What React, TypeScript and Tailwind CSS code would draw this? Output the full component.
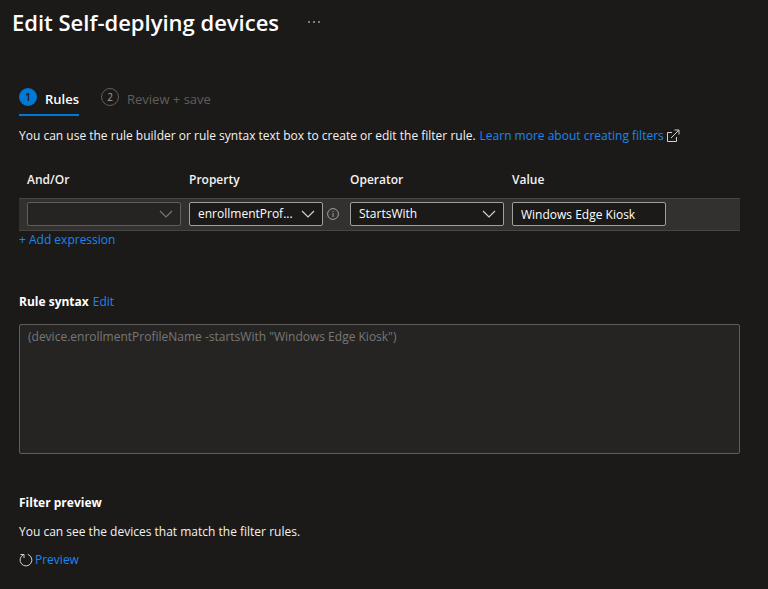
import type { ReactNode, SelectHTMLAttributes } from "react";

const ChevronDown = ({ className }: { className: string }) => (
  <svg viewBox="0 0 14 8" className={className} fill="none" stroke="currentColor" aria-hidden="true">
    <path d="M1 1l6 6 6-6" strokeWidth="1.2" />
  </svg>
);

const InfoIcon = () => (
  <svg viewBox="0 0 12 12" className="h-3 w-3" fill="none" stroke="currentColor" aria-hidden="true">
    <circle cx="6" cy="6" r="5.4" />
    <path d="M6 5v4M6 3v1" />
  </svg>
);

const ExternalIcon = () => (
  <svg viewBox="0 0 14 14" className="h-3.5 w-3.5" fill="none" stroke="currentColor" aria-hidden="true">
    <path d="M6 3.5H1.5v9h9V8" />
    <path d="M5 9l7.5-7.5M8.5 1h4.5v4.5" />
  </svg>
);

const RefreshIcon = () => (
  <svg viewBox="0 0 14 14" className="h-3.5 w-3.5" fill="none" stroke="currentColor" aria-hidden="true">
    <path d="M8.8 1.4A5.9 5.9 0 1 1 4.4 1.7" />
    <path d="M1.5 1.5h3.5V5" />
  </svg>
);

type DropdownProps = SelectHTMLAttributes<HTMLSelectElement> & { children: ReactNode };

const Dropdown = ({ children, ...props }: DropdownProps) => (
  <div className="relative min-w-0 flex-1">
    <select
      {...props}
      className="block h-6 w-full appearance-none rounded-xs border border-[#a19f9d] bg-[#1b1a19] pr-6 pl-2 text-white disabled:border-[#605e5c] disabled:bg-[#252423] disabled:opacity-100"
    >
      {children}
    </select>
    <ChevronDown
      className={
        props.disabled
          ? "pointer-events-none absolute top-2 right-2 h-2 w-3.5 text-[#797775]"
          : "pointer-events-none absolute top-2 right-2 h-2 w-3.5 text-[#d2d0ce]"
      }
    />
  </div>
);

export default function App() {
  return (
    <div className="min-h-screen bg-[#1b1a19] font-['Open_Sans','Noto_Sans',sans-serif] text-[12px] leading-4 text-[#f3f2f1]">
      {/* Title */}
      <header className="flex items-center gap-7 px-3 pt-1.5">
        <h1 className="text-[22px] leading-8 font-semibold text-white">Edit Self-deplying devices</h1>
        <button type="button" aria-label="More actions" className="text-[#a19f9d]">
          <svg viewBox="0 0 14 4" className="h-1 w-3.5" fill="currentColor" aria-hidden="true">
            <circle cx="2" cy="2" r="1" />
            <circle cx="7" cy="2" r="1" />
            <circle cx="12" cy="2" r="1" />
          </svg>
        </button>
      </header>

      <main className="pt-[50px] pr-7 pb-4 pl-[19px]">
        {/* Steps */}
        <nav className="flex gap-[22px]">
          <button type="button" className="flex h-7 items-start gap-2 border-b-2 border-[#0078d4] font-semibold text-white">
            <span className="flex h-[18px] w-[18px] items-center justify-center rounded-full bg-[#0078d4] text-[10px] text-[#1b1a19]">
              1
            </span>
            <span className="text-[13px] leading-[22px]">Rules</span>
          </button>
          <button type="button" className="flex h-7 items-start gap-2 text-[#605e5c]">
            <span className="flex h-[18px] w-[18px] items-center justify-center rounded-full border border-[#605e5c] text-[10px] text-[#a19f9d]">
              2
            </span>
            <span className="text-[13px] leading-[22px]">Review + save</span>
          </button>
        </nav>

        <p className="mt-3 flex items-center gap-1">
          <span>You can use the rule builder or rule syntax text box to create or edit the filter rule.</span>
          <a href="#filters" className="flex items-center gap-0.5 text-[#1a86f0]">
            Learn more about creating filters
            <span className="text-[#d2d0ce]">
              <ExternalIcon />
            </span>
          </a>
        </p>

        {/* Rule builder */}
        <table className="mt-7 w-full table-fixed border-collapse text-left">
          <thead>
            <tr className="h-[26px] align-top">
              <th className="w-[170px] pl-2 font-semibold">And/Or</th>
              <th className="w-[161px] font-semibold">Property</th>
              <th className="w-[162px] font-semibold">Operator</th>
              <th className="font-semibold">Value</th>
            </tr>
          </thead>
          <tbody>
            <tr className="h-8 border-y border-[#484644] bg-[#323130]">
              <td className="pr-2 pl-2">
                <div className="flex">
                  <Dropdown aria-label="And/Or" disabled>
                    <option></option>
                  </Dropdown>
                </div>
              </td>
              <td className="pr-[11px]">
                <div className="flex items-center gap-1">
                  <Dropdown aria-label="Property">
                    <option>enrollmentProf...</option>
                  </Dropdown>
                  <span className="text-[#a19f9d]">
                    <InfoIcon />
                  </span>
                </div>
              </td>
              <td className="pr-2">
                <div className="flex">
                  <Dropdown aria-label="Operator">
                    <option>StartsWith</option>
                  </Dropdown>
                </div>
              </td>
              <td>
                <input
                  type="text"
                  aria-label="Value"
                  defaultValue="Windows Edge Kiosk"
                  className="block h-6 w-[154px] rounded-xs border border-[#a19f9d] bg-[#1b1a19] px-2 text-white"
                />
              </td>
            </tr>
          </tbody>
        </table>
        <button type="button" className="mt-px block text-[#1a86f0]">
          + Add expression
        </button>

        {/* Rule syntax */}
        <div className="mt-[46px] flex gap-1">
          <label htmlFor="syntax" className="font-bold text-white">
            Rule syntax
          </label>
          <button type="button" className="text-[#1a86f0]">
            Edit
          </button>
        </div>
        <textarea
          id="syntax"
          disabled
          defaultValue={'(device.enrollmentProfileName -startsWith "Windows Edge Kiosk")'}
          className="mt-[14px] block h-[130px] w-full resize-none rounded-xs border border-[#605e5c] bg-[#252423] px-2 py-1 text-[#797775]"
        />

        {/* Preview */}
        <h2 className="mt-[41px] font-bold text-white">Filter preview</h2>
        <p className="mt-[13px]">You can see the devices that match the filter rules.</p>
        <button type="button" className="mt-3 flex items-center gap-0.5 text-[#1a86f0]">
          <span className="text-[#d2d0ce]">
            <RefreshIcon />
          </span>
          Preview
        </button>
      </main>
    </div>
  );
}
